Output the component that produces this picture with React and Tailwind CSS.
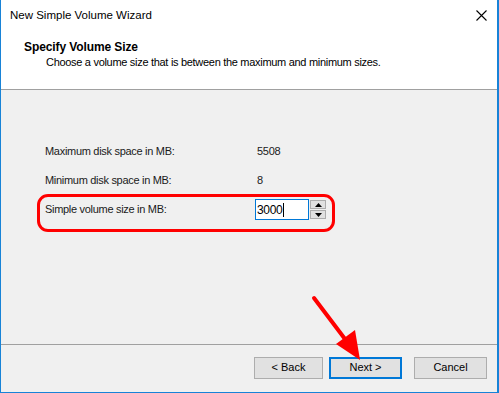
import React from 'react';

const font = { fontFamily: '"Liberation Sans", Arial, sans-serif' };

const Row = ({ label, value }) => (
  <div className="flex items-center h-[29px]">
    <div className="w-[212px] pl-[44px] box-content">{label}</div>
    <div>{value}</div>
  </div>
);

const Spinner = () => (
  <div className="flex flex-col gap-[1px] ml-[1px]">
    <button className="w-[16px] h-[9px] bg-[#e1e1e1] border border-[#adadad] flex items-center justify-center">
      <svg width="7" height="4" viewBox="0 0 7 4"><path d="M0 4 L3.5 0 L7 4 Z" fill="#000" /></svg>
    </button>
    <button className="w-[16px] h-[9px] bg-[#e1e1e1] border border-[#adadad] flex items-center justify-center">
      <svg width="7" height="4" viewBox="0 0 7 4"><path d="M0 0 L7 0 L3.5 4 Z" fill="#000" /></svg>
    </button>
  </div>
);

const Button = ({ children, primary, wide }) => (
  <button
    className={
      primary
        ? 'w-[73px] h-[22px] bg-[#e1e1e1] border-2 border-[#0078d7] text-black'
        : wide
        ? 'w-[73px] h-[22px] bg-[#e1e1e1] border border-[#adadad] text-black'
        : 'w-[69px] h-[22px] bg-[#e1e1e1] border border-[#adadad] text-black'
    }
  >
    {children}
  </button>
);

const App = () => {
  return (
    <div className="relative w-[499px] h-[393px] bg-[#f0f0f0] border-l border-r-2 border-b border-[#1883d7] text-[11px] tracking-[-0.3px] text-[#1a1a1a] overflow-hidden flex flex-col" style={font}>
      {/* title + header */}
      <div className="bg-white h-[90px] border-b border-[#a0a0a0] flex flex-col">
        <div className="flex items-center justify-between h-[31px] pl-[9px] pr-[10px]">
          <span className="text-[11.5px] tracking-normal text-black">New Simple Volume Wizard</span>
          <svg width="11" height="11" viewBox="0 0 11 11">
            <path d="M0.5 0.5 L10.5 10.5 M10.5 0.5 L0.5 10.5" stroke="#000" strokeWidth="1.1" />
          </svg>
        </div>
        <div className="pl-[23px] pt-[9px] text-[12px] tracking-[-0.1px] font-bold text-black leading-[15px]">Specify Volume Size</div>
        <div className="pl-[45px] leading-[15px] text-black">Choose a volume size that is between the maximum and minimum sizes.</div>
      </div>

      {/* body */}
      <div className="flex-1 flex flex-col pt-[47px]">
        <Row label="Maximum disk space in MB:" value="5508" />
        <Row label="Minimum disk space in MB:" value="8" />
        <div className="flex items-center h-[29px]">
          <div className="w-[210px] pl-[44px] box-content">Simple volume size in MB:</div>
          <div className="flex items-center">
            <div className="w-[54px] h-[21px] bg-white border border-[#0078d7] flex items-center pl-[1px] text-[12px] text-black">
              3000<span className="inline-block w-[1px] h-[14px] bg-black" />
            </div>
            <Spinner />
          </div>
        </div>
      </div>

      {/* footer */}
      <div className="h-[48px] border-t border-[#a0a0a0] flex items-center justify-end pr-[10px] pb-[2px] tracking-normal">
        <Button>&lt; Back</Button>
        <div className="w-[6px]" />
        <Button primary>Next &gt;</Button>
        <div className="w-[12px]" />
        <Button wide>Cancel</Button>
      </div>

      {/* annotations */}
      <div className="absolute left-[36px] top-[194px] w-[298px] h-[38px] border-[3px] border-[#ff0000] rounded-[11px]" />
      <svg className="absolute left-0 top-0" width="499" height="393" viewBox="0 0 499 393">
        <line x1="313" y1="298" x2="347" y2="343" stroke="#f00" strokeWidth="4" strokeLinecap="round" />
        <path d="M359 360 L335 344 L354 330 Z" fill="#f00" />
      </svg>
    </div>
  );
};

export default App;
